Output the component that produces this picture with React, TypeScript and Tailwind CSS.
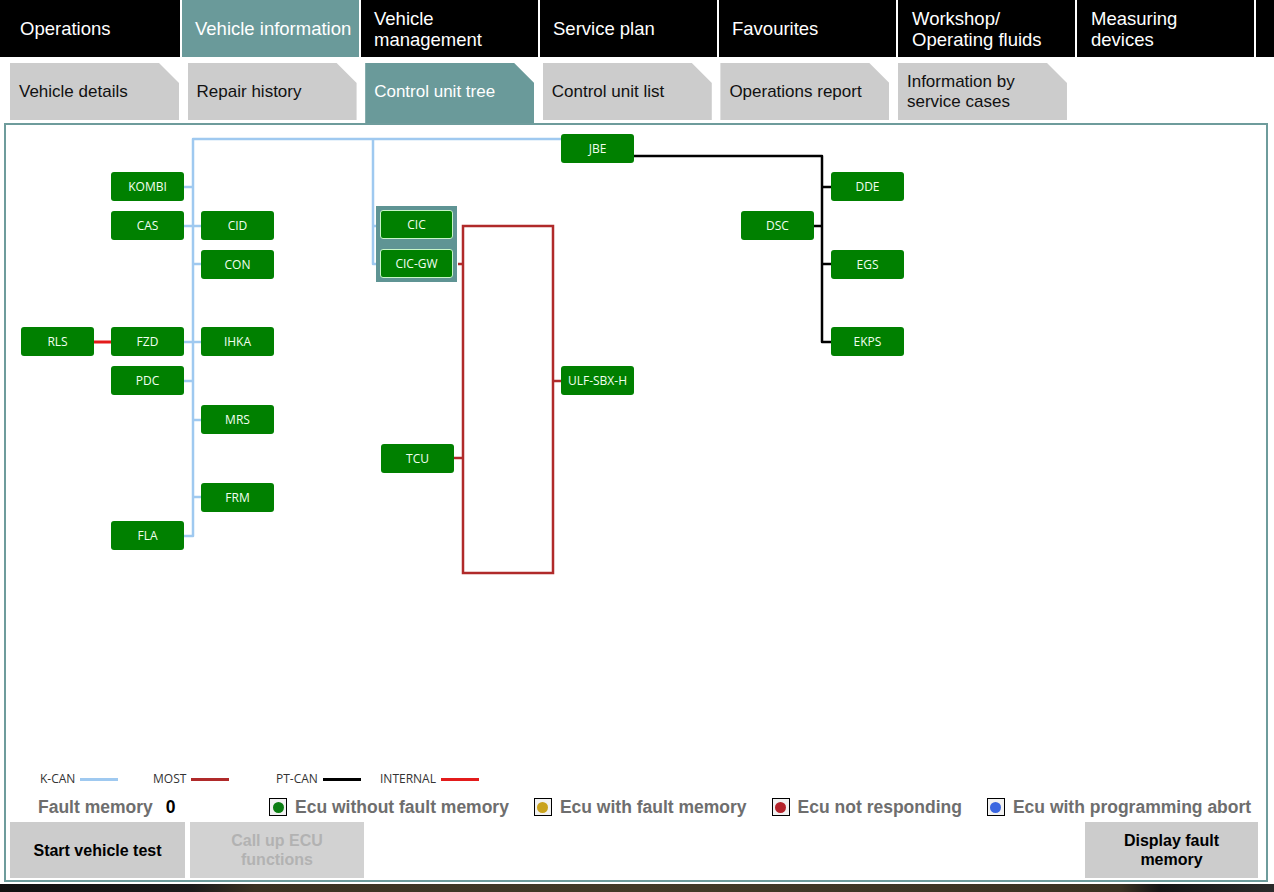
import React from "react";

const navItems = [
  { label: "Operations", cls: "w-[180px] pl-[20px]" },
  { label: "Vehicle information", cls: "w-[177px] pl-[13px]", active: true },
  { label: "Vehicle\nmanagement", cls: "w-[177px] pl-[13px]" },
  { label: "Service plan", cls: "w-[177px] pl-[13px]" },
  { label: "Favourites", cls: "w-[177px] pl-[13px]" },
  { label: "Workshop/\nOperating fluids", cls: "w-[177px] pl-[14px]" },
  { label: "Measuring\ndevices", cls: "w-[177px] pl-[14px]" },
  { label: "", cls: "flex-1" },
];

const subTabs = [
  { label: "Vehicle details" },
  { label: "Repair history" },
  { label: "Control unit tree", active: true },
  { label: "Control unit list" },
  { label: "Operations report" },
  { label: "Information by\nservice cases" },
];

// node positions in page coordinates (left, top)
const nodes: [string, number, number][] = [
  ["KOMBI", 111, 172],
  ["CAS", 111, 211],
  ["CID", 201, 211],
  ["CON", 201, 250],
  ["RLS", 21, 327],
  ["FZD", 111, 327],
  ["IHKA", 201, 327],
  ["PDC", 111, 366],
  ["MRS", 201, 405],
  ["FRM", 201, 483],
  ["FLA", 111, 521],
  ["JBE", 561, 134],
  ["TCU", 381, 444],
  ["ULF-SBX-H", 561, 366],
  ["DSC", 741, 211],
  ["DDE", 831, 172],
  ["EGS", 831, 250],
  ["EKPS", 831, 327],
];

const OX = 6;
const OY = 125;

const busLegend = [
  { label: "K-CAN", color: "bg-[#9fc9f0]", cls: "w-[113px]" },
  { label: "MOST", color: "bg-[#b02a2a]", cls: "w-[123px]" },
  { label: "PT-CAN", color: "bg-black", cls: "w-[104px]" },
  { label: "INTERNAL", color: "bg-[#e31b1b]", cls: "" },
];

const ecuLegend = [
  { label: "Ecu without fault memory", dot: "bg-[#0b7d12]" },
  { label: "Ecu with fault memory", dot: "bg-[#c9a21c]" },
  { label: "Ecu not responding", dot: "bg-[#b3222a]" },
  { label: "Ecu with programming abort", dot: "bg-[#3a66e0]" },
];

function Node({ label, bordered }: { label: string; bordered?: boolean }) {
  return (
    <div
      className={`w-[73px] h-[29px] rounded-[3px] bg-[#008000] flex items-center justify-center text-[12px] text-[#f2fff0] ${
        bordered ? "border border-[#c8f5c8]" : ""
      }`}
      style={{ fontFamily: '"Open Sans", "Noto Sans", sans-serif' }}
    >
      {label}
    </div>
  );
}

function Diagram() {
  return (
    <div className="relative h-[640px]">
      <svg
        className="absolute left-0 top-0"
        width={1260}
        height={640}
        viewBox="6 125 1260 640"
        fill="none"
      >
        {/* K-CAN */}
        <g stroke="#9fc9f0" strokeWidth={2.5} strokeLinejoin="round">
          <path d="M184 536 H193 V139 H561" />
          <path d="M184 187 H193 M184 226 H201 M193 264 H201 M184 342 H201 M184 381 H193 M193 420 H201 M193 497 H201" />
          <path d="M373 139 V264 H376 M373 226 H376" />
        </g>
        {/* MOST */}
        <g stroke="#b02a2a" strokeWidth={2.5}>
          <path d="M463 226 H553 V573 H463 Z" />
          <path d="M458 264 H463 M454 458 H463 M553 381 H561" />
        </g>
        {/* PT-CAN */}
        <g stroke="#000" strokeWidth={2.5} strokeLinejoin="round">
          <path d="M634 156 H822 V342 H831" />
          <path d="M822 187 H831 M814 226 H822 M822 264 H831" />
        </g>
        {/* INTERNAL */}
        <path d="M94 342 H111" stroke="#e31b1b" strokeWidth={3} />
      </svg>

      {nodes.map(([label, x, y]) => (
        <div key={label} className="absolute" style={{ left: x - OX, top: y - OY }}>
          <Node label={label} />
        </div>
      ))}

      <div
        className="absolute bg-[#5f9494] p-[4px] flex flex-col gap-[10px]"
        style={{ left: 376 - OX, top: 206 - OY }}
      >
        <Node label="CIC" bordered />
        <Node label="CIC-GW" bordered />
      </div>
    </div>
  );
}

export default function App() {
  return (
    <div
      className="w-[1274px] h-[892px] bg-white overflow-hidden"
      style={{ fontFamily: '"Liberation Sans", Arial, sans-serif' }}
    >
      {/* main navigation */}
      <div className="flex gap-[2px] h-[57px]">
        {navItems.map((item, i) => (
          <div
            key={i}
            className={`${item.cls} h-full flex items-center text-[18.5px] leading-[21px] text-white whitespace-pre-line ${
              item.active ? "bg-[#6a9a9a]" : "bg-black"
            }`}
          >
            {item.label}
          </div>
        ))}
      </div>

      {/* sub tabs */}
      <div className="flex gap-[8.6px] pl-[10px] mt-[6px] h-[60px] items-start">
        {subTabs.map((tab, i) => (
          <div
            key={i}
            className={`w-[169px] flex items-center pl-[9px] text-[17px] leading-[20px] whitespace-pre-line [clip-path:polygon(0_0,calc(100%-20px)_0,100%_20px,100%_100%,0_100%)] ${
              tab.active
                ? "h-[60px] pb-[3px] bg-[#6a9a9a] text-white"
                : "h-[57px] bg-[#cccccc] text-[#111]"
            }`}
          >
            {tab.label}
          </div>
        ))}
      </div>

      {/* frame */}
      <div className="ml-[4px] w-[1264px] border-2 border-[#6e9c9c] bg-white">
        <Diagram />

        {/* bus legend */}
        <div
          className="h-[28px] flex items-center pl-[34px] text-[12px] text-[#333]"
          style={{ fontFamily: '"Open Sans", "Noto Sans", sans-serif' }}
        >
          {busLegend.map((b) => (
            <div key={b.label} className={`${b.cls} flex items-center`}>
              <span>{b.label}</span>
              <span className={`ml-[5px] w-[38px] h-[3px] ${b.color}`} />
            </div>
          ))}
        </div>

        {/* fault memory + ecu legend */}
        <div className="h-[28px] flex items-center text-[17.5px] font-bold">
          <div className="w-[263px] flex items-center pl-[32px]">
            <span className="text-[#6e6e6e]">Fault memory</span>
            <span className="ml-[13px] text-black">0</span>
          </div>
          <div className="flex items-center gap-[25px]">
            {ecuLegend.map((e) => (
              <div key={e.label} className="flex items-center">
                <div className="w-[18px] h-[18px] border border-black bg-[#f2f2f2] flex items-center justify-center">
                  <div className={`w-[11px] h-[11px] rounded-full ${e.dot}`} />
                </div>
                <span className="ml-[8px] text-[#6e6e6e]">{e.label}</span>
              </div>
            ))}
          </div>
        </div>

        {/* buttons */}
        <div className="mt-px h-[56px] mb-[2px] flex gap-[5px] pl-[4px] pr-[8px] text-[16px] font-bold leading-[19px]">
          <button className="w-[175px] h-full bg-[#cccccc] text-black">Start vehicle test</button>
          <button className="w-[174px] h-full bg-[#d2d2d2] text-[#b2b2b2] px-[30px]">
            Call up ECU functions
          </button>
          <div className="flex-1" />
          <button className="w-[173px] h-full bg-[#cccccc] text-black px-[30px]">
            Display fault memory
          </button>
        </div>
      </div>

      {/* background photo strip */}
      <div className="mt-[2px] h-[8px] bg-[linear-gradient(90deg,#111_0%,#1b1b1b_15%,#3a3222_20%,#423a28_50%,#3a3222_88%,#151515_91%,#2a2a2a_100%)]" />
    </div>
  );
}
